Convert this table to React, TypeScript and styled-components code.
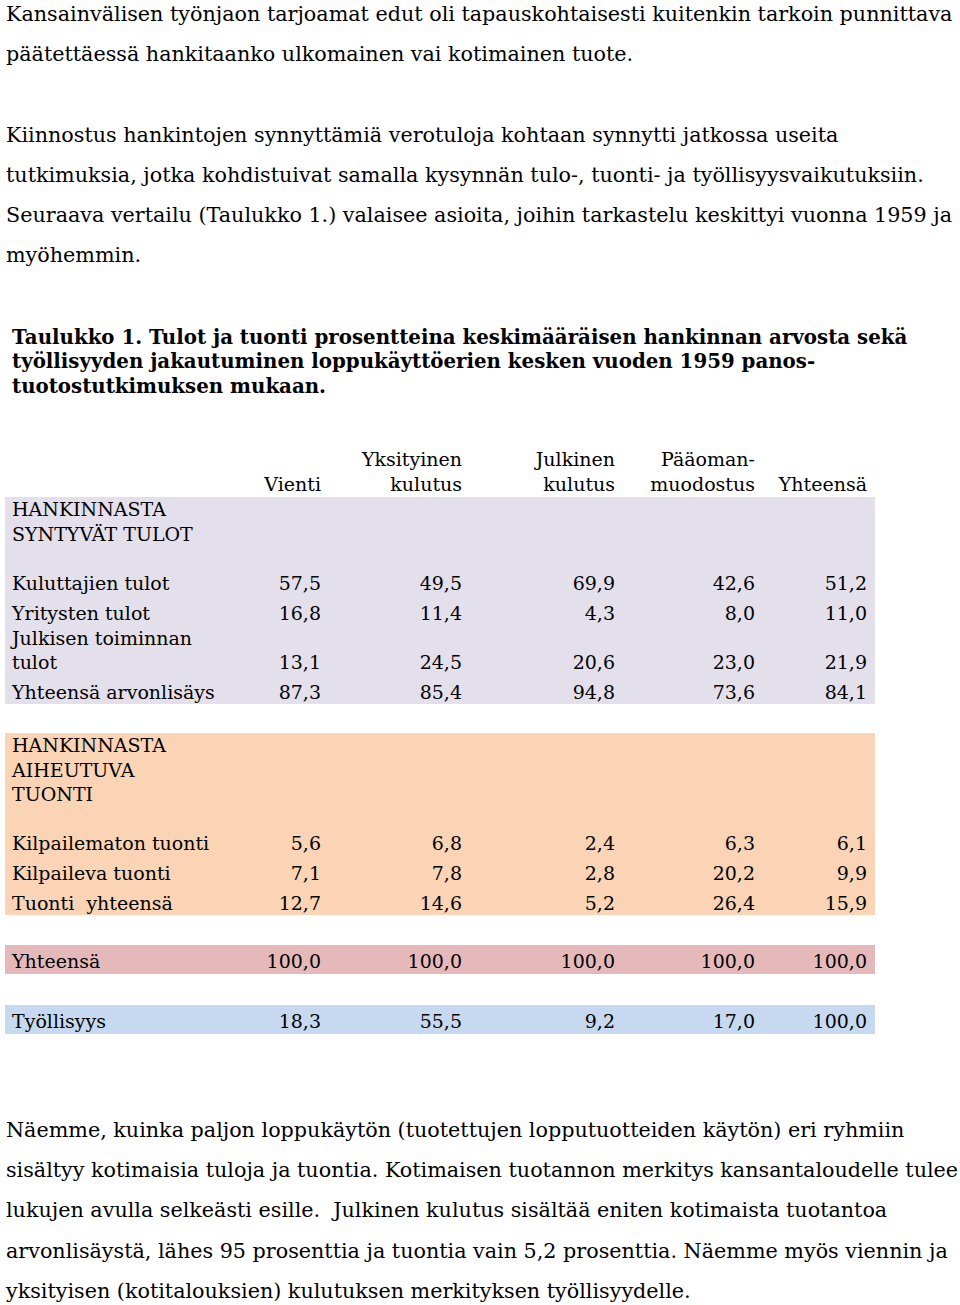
import React from "react";
import styled, { createGlobalStyle } from "styled-components";

const GlobalStyle = createGlobalStyle`
  html, body { margin: 0; padding: 0; background: #ffffff; }
  body { font-family: "DejaVu Serif", "Liberation Serif", serif; color: #000000; }
`;

const Page = styled.div`
  width: 960px;
  padding: 0 0 0 5px;
  box-sizing: border-box;
  overflow: hidden;
`;

const Paragraph = styled.p<{ $top: number }>`
  margin: ${(p) => p.$top}px 0 0 1px;
  font-size: 20.7px;
  line-height: 40.3px;
  white-space: nowrap;
`;

const Caption = styled.h2`
  margin: 49px 0 0 7px;
  font-size: 19.8px;
  line-height: 24.5px;
  font-weight: bold;
  white-space: nowrap;
`;

const Table = styled.table`
  margin-top: 49px;
  width: 870px;
  table-layout: fixed;
  border-collapse: collapse;
  font-size: 19px;
  line-height: 24.5px;
`;

type Tone = "none" | "lavender" | "peach" | "pink" | "blue";
const toneColors: Record<Tone, string> = {
  none: "transparent",
  lavender: "#e3dfeb",
  peach: "#fad4b5",
  pink: "#e5b9ba",
  blue: "#c6d9f0",
};

const Row = styled.tr<{ $tone: Tone }>`
  background: ${(p) => toneColors[p.$tone]};
`;

const Cell = styled.td<{ $num?: boolean; $pt?: number; $pb?: number }>`
  padding: ${(p) => p.$pt ?? 0}px 8px ${(p) => p.$pb ?? 0}px 7px;
  text-align: ${(p) => (p.$num ? "right" : "left")};
  vertical-align: bottom;
  white-space: nowrap;
`;

const HeadCell = styled.th`
  padding: 0 8px 1px 7px;
  text-align: right;
  vertical-align: bottom;
  font-weight: normal;
  white-space: nowrap;
  height: 50px;
  box-sizing: border-box;
`;

const Spacer = styled.tr<{ $h: number }>`
  height: ${(p) => p.$h}px;
`;

type DataRow = { label: React.ReactNode; values: string[]; pt?: number; pb?: number };

const incomeRows: DataRow[] = [
  { label: "Kuluttajien tulot", values: ["57,5", "49,5", "69,9", "42,6", "51,2"], pb: 5.5 },
  { label: "Yritysten tulot", values: ["16,8", "11,4", "4,3", "8,0", "11,0"], pb: 0.5 },
  { label: <>Julkisen toiminnan<br />tulot</>, values: ["13,1", "24,5", "20,6", "23,0", "21,9"], pb: 5 },
  { label: "Yhteensä arvonlisäys", values: ["87,3", "85,4", "94,8", "73,6", "84,1"], pb: 0 },
];

const importRows: DataRow[] = [
  { label: "Kilpailematon tuonti", values: ["5,6", "6,8", "2,4", "6,3", "6,1"], pb: 5.5 },
  { label: "Kilpaileva tuonti", values: ["7,1", "7,8", "2,8", "20,2", "9,9"], pb: 5 },
  { label: "Tuonti\u00a0 yhteensä", values: ["12,7", "14,6", "5,2", "26,4", "15,9"], pb: 0 },
];

const DataLine: React.FC<{ row: DataRow; tone: Tone }> = ({ row, tone }) => (
  <Row $tone={tone}>
    <Cell $pt={row.pt} $pb={row.pb}>{row.label}</Cell>
    {row.values.map((v, i) => (
      <Cell key={i} $num $pt={row.pt} $pb={row.pb}>{v}</Cell>
    ))}
  </Row>
);

const SectionHead: React.FC<{ tone: Tone; lines: string[] }> = ({ tone, lines }) => (
  <Row $tone={tone}>
    <Cell colSpan={6} $pb={24.5}>
      {lines.map((l, i) => (
        <React.Fragment key={i}>
          {i > 0 && <br />}
          {l}
        </React.Fragment>
      ))}
    </Cell>
  </Row>
);

export default function App() {
  return (
    <>
      <GlobalStyle />
      <Page>
        <Paragraph $top={-6}>
          Kansainvälisen työnjaon tarjoamat edut oli tapauskohtaisesti kuitenkin tarkoin punnittava
          <br />
          päätettäessä hankitaanko ulkomainen vai kotimainen tuote.
        </Paragraph>
        <Paragraph $top={40}>
          Kiinnostus hankintojen synnyttämiä verotuloja kohtaan synnytti jatkossa useita
          <br />
          tutkimuksia, jotka kohdistuivat samalla kysynnän tulo-, tuonti- ja työllisyysvaikutuksiin.
          <br />
          Seuraava vertailu (Taulukko 1.) valaisee asioita, joihin tarkastelu keskittyi vuonna 1959 ja
          <br />
          myöhemmin.
        </Paragraph>
        <Caption>
          Taulukko 1. Tulot ja tuonti prosentteina keskimääräisen hankinnan arvosta sekä
          <br />
          työllisyyden jakautuminen loppukäyttöerien kesken vuoden 1959 panos-
          <br />
          tuotostutkimuksen mukaan.
        </Caption>
        <Table>
          <colgroup>
            <col style={{ width: 220 }} />
            <col style={{ width: 104 }} />
            <col style={{ width: 141 }} />
            <col style={{ width: 153 }} />
            <col style={{ width: 140 }} />
            <col style={{ width: 112 }} />
          </colgroup>
          <thead>
            <tr>
              <HeadCell />
              <HeadCell>Vienti</HeadCell>
              <HeadCell>Yksityinen<br />kulutus</HeadCell>
              <HeadCell>Julkinen<br />kulutus</HeadCell>
              <HeadCell>Pääoman-<br />muodostus</HeadCell>
              <HeadCell>Yhteensä</HeadCell>
            </tr>
          </thead>
          <tbody>
            <SectionHead tone="lavender" lines={["HANKINNASTA", "SYNTYVÄT TULOT"]} />
            {incomeRows.map((r, i) => (
              <DataLine key={i} row={r} tone="lavender" />
            ))}
            <Spacer $h={29} />
            <SectionHead tone="peach" lines={["HANKINNASTA", "AIHEUTUVA", "TUONTI"]} />
            {importRows.map((r, i) => (
              <DataLine key={i} row={r} tone="peach" />
            ))}
            <Spacer $h={30} />
            <DataLine
              tone="pink"
              row={{ label: "Yhteensä", values: ["100,0", "100,0", "100,0", "100,0", "100,0"], pt: 4 }}
            />
            <Spacer $h={31} />
            <DataLine
              tone="blue"
              row={{ label: "Työllisyys", values: ["18,3", "55,5", "9,2", "17,0", "100,0"], pt: 4.5 }}
            />
          </tbody>
        </Table>
        <Paragraph $top={76}>
          Näemme, kuinka paljon loppukäytön (tuotettujen lopputuotteiden käytön) eri ryhmiin
          <br />
          sisältyy kotimaisia tuloja ja tuontia. Kotimaisen tuotannon merkitys kansantaloudelle tulee
          <br />
          lukujen avulla selkeästi esille.&nbsp; Julkinen kulutus sisältää eniten kotimaista tuotantoa
          <br />
          arvonlisäystä, lähes 95 prosenttia ja tuontia vain 5,2 prosenttia. Näemme myös viennin ja
          <br />
          yksityisen (kotitalouksien) kulutuksen merkityksen työllisyydelle.
        </Paragraph>
      </Page>
    </>
  );
}
